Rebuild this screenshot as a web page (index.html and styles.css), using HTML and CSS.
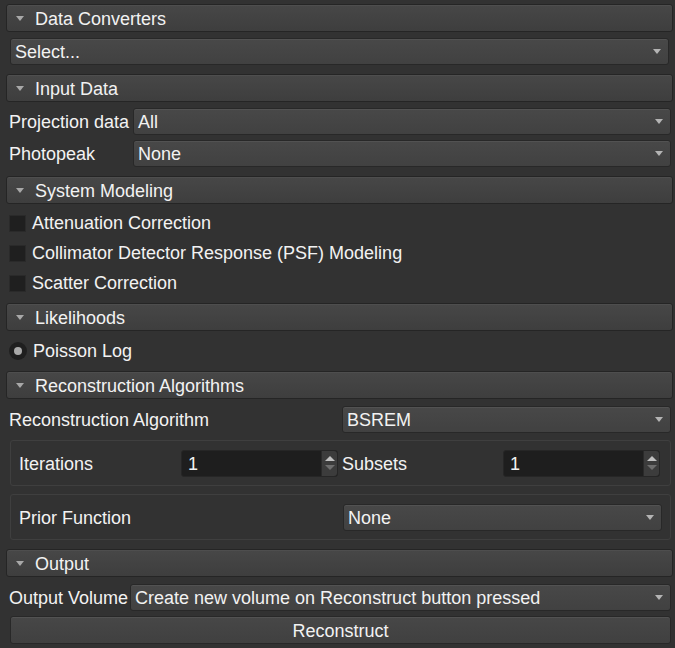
FILE: index.html
```html
<!DOCTYPE html>
<html>
<head>
<meta charset="utf-8">
<link rel="stylesheet" href="styles.css">
</head>
<body>
<div class="panel">
  <div class="hdr"><span class="tri"></span>Data Converters</div>
  <div class="sect s-conv">
    <div class="combo full"><span>Select...</span><span class="arr"></span></div>
  </div>

  <div class="hdr"><span class="tri"></span>Input Data</div>
  <div class="sect s-input">
    <div class="row"><span class="lbl w-proj">Projection data</span><div class="combo grow"><span>All</span><span class="arr"></span></div></div>
    <div class="row"><span class="lbl w-proj">Photopeak</span><div class="combo grow"><span>None</span><span class="arr"></span></div></div>
  </div>

  <div class="hdr"><span class="tri"></span>System Modeling</div>
  <div class="sect s-sys">
    <div class="chk"><span class="box"></span>Attenuation Correction</div>
    <div class="chk"><span class="box"></span>Collimator Detector Response (PSF) Modeling</div>
    <div class="chk"><span class="box"></span>Scatter Correction</div>
  </div>

  <div class="hdr"><span class="tri"></span>Likelihoods</div>
  <div class="sect s-lik">
    <div class="chk"><span class="radio"><span class="dot"></span></span>Poisson Log</div>
  </div>

  <div class="hdr"><span class="tri"></span>Reconstruction Algorithms</div>
  <div class="sect s-rec">
    <div class="row r-alg"><span class="lbl w-alg">Reconstruction Algorithm</span><div class="combo grow"><span>BSREM</span><span class="arr"></span></div></div>
    <div class="group g1">
      <span class="lbl w-it">Iterations</span>
      <div class="spin"><span class="val">1</span><span class="btns"><span class="up"></span><span class="dn"></span></span></div>
      <span class="lbl w-sub">Subsets</span>
      <div class="spin"><span class="val">1</span><span class="btns"><span class="up"></span><span class="dn"></span></span></div>
    </div>
    <div class="group g2">
      <span class="lbl w-prior">Prior Function</span>
      <div class="combo grow"><span>None</span><span class="arr"></span></div>
    </div>
  </div>

  <div class="hdr"><span class="tri"></span>Output</div>
  <div class="sect s-out">
    <div class="row"><span class="lbl w-out">Output Volume</span><div class="combo grow"><span>Create new volume on Reconstruct button pressed</span><span class="arr"></span></div></div>
    <div class="btn">Reconstruct</div>
  </div>
</div>
</body>
</html>
```

FILE: styles.css
```css
* { box-sizing: border-box; }
html, body { margin: 0; padding: 0; }
body {
  background: #323232;
  color: #f2f2f2;
  font-family: "Liberation Sans", Arial, sans-serif;
  font-size: 18px;
  width: 675px;
  height: 648px;
  overflow: hidden;
}
.panel {
  display: flex;
  flex-direction: column;
  padding: 4px 2px 0 6px;
}
.hdr {
  height: 28px;
  display: flex;
  align-items: center;
  border: 1px solid #252525;
  border-radius: 3px;
  background: linear-gradient(#474747, #3e3e3e);
  box-shadow: inset 0 1px 0 #4e4e4e;
  padding: 2px 0 0 9px;
}
.tri {
  width: 0; height: 0;
  border-left: 4.5px solid transparent;
  border-right: 4.5px solid transparent;
  border-top: 5px solid #a8a8a8;
  margin-right: 11px;
  margin-bottom: 1px;
}
.sect {
  display: flex;
  flex-direction: column;
  padding-left: 3px;
  padding-right: 2px;
}
.s-conv { padding: 6px 2px 9px 4px; }
.s-input { padding: 5px 2px 9px 3px; gap: 4px; }
.s-sys { padding: 4px 2px 5px 3px; gap: 0; }
.s-lik { padding: 5px 2px 5px 3px; }
.s-rec { padding: 6px 2px 9px 3px; }
.s-out { padding: 6px 2px 0 3px; gap: 5px; }

.row { display: flex; align-items: center; height: 28px; }
.lbl { white-space: nowrap; flex: none; padding-top: 2px; }
.w-proj { width: 124px; }
.w-alg { width: 333px; }
.w-out { width: 121px; }
.w-it { width: 162px; }
.w-sub { width: 161px; margin-left: 4px; }
.w-prior { width: 324px; }

.combo {
  height: 27px;
  display: flex;
  align-items: center;
  justify-content: space-between;
  border: 1px solid #282828;
  border-radius: 3px;
  background: linear-gradient(#484848, #414141);
  box-shadow: inset 0 1px 0 #525252;
  padding: 2px 7px 0 4px;
  white-space: nowrap;
}
.s-conv .combo { width: 659px; }
.grow { flex: 1; }
.arr {
  width: 0; height: 0;
  border-left: 4.5px solid transparent;
  border-right: 4.5px solid transparent;
  border-top: 5px solid #b4b4b4;
  margin-bottom: 2px;
}

.chk { display: flex; align-items: center; height: 30px; }
.chk-t { padding-top: 2px; }
.box {
  width: 17px; height: 17px;
  background: #1f1f1f;
  border: 1px solid #2a2a2a;
  margin-right: 6px;
  flex: none;
}
.radio {
  width: 18px; height: 18px;
  border-radius: 50%;
  background: #1f1f1f;
  display: flex; align-items: center; justify-content: center;
  margin-right: 6px;
  flex: none;
}
.dot { width: 8px; height: 8px; border-radius: 50%; background: #a9a9a9; }

.r-alg { height: 28px; margin-bottom: 7px; }
.group {
  display: flex;
  align-items: center;
  border: 1px solid #3f3f3f;
  border-radius: 3px;
  padding: 0 8px 0 8px;
  margin-left: 1px;
}
.g1 { height: 46px; margin-bottom: 8px; }
.g2 { height: 46px; }
.spin {
  width: 157px;
  height: 27px;
  display: flex;
  background: #1e1e1e;
  border-radius: 3px;
  border: 1px solid #262626;
}
.spin .val { flex: 1; display: flex; align-items: center; padding: 2px 0 0 6px; }
.btns {
  width: 16px;
  display: flex;
  flex-direction: column;
  justify-content: center;
  align-items: center;
  gap: 4px;
  background: #3c3c3c;
  border-left: 1px solid #2a2a2a;
  border-radius: 0 3px 3px 0;
}
.up {
  width: 0; height: 0;
  border-left: 5px solid transparent;
  border-right: 5px solid transparent;
  border-bottom: 5px solid #c0c0c0;
}
.dn {
  width: 0; height: 0;
  border-left: 5px solid transparent;
  border-right: 5px solid transparent;
  border-top: 5px solid #6e6e6e;
}
.btn {
  height: 28px;
  display: flex;
  align-items: center;
  justify-content: center;
  border: 1px solid #282828;
  border-radius: 3px;
  background: linear-gradient(#474747, #404040);
  box-shadow: inset 0 1px 0 #525252;
  margin-left: 1px;
  padding-top: 2px;
}
```
